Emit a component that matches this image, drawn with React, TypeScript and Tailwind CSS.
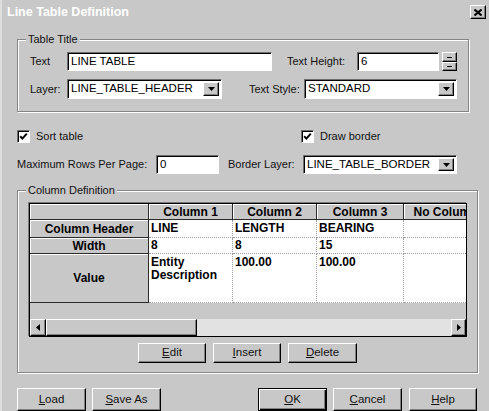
import React from "react";

const sunken =
  "border border-t-[#6e6e6e] border-l-[#6e6e6e] border-r-white border-b-white shadow-[inset_1px_1px_0_#000]";
const raised =
  "border border-t-white border-l-white border-r-black border-b-black shadow-[inset_-1px_-1px_0_#808080]";

function DownTri() {
  return (
    <svg width="7" height="4" viewBox="0 0 7 4">
      <polygon points="0,0 7,0 3.5,4" fill="#000" />
    </svg>
  );
}

function Field({ className, children }: { className: string; children?: React.ReactNode }) {
  return (
    <div className={`flex items-center bg-white pl-[3px] text-[11.5px] text-black ${sunken} ${className}`}>
      {children}
    </div>
  );
}

function Combo({ className, text }: { className: string; text: string }) {
  return (
    <div className={`flex items-center bg-white p-[2px] pl-[3px] ${sunken} ${className}`}>
      <span className="flex-1 text-[11.5px] text-black whitespace-nowrap">{text}</span>
      <div className={`h-full w-[16px] flex items-center justify-center bg-[#c8c8c8] ${raised}`}>
        <DownTri />
      </div>
    </div>
  );
}

function Btn({ className, children, def }: { className: string; children: React.ReactNode; def?: boolean }) {
  return (
    <div
      className={`flex items-center justify-center bg-[#c8c8c8] text-[11.5px] text-[#111] ${
        def
          ? "border border-black shadow-[inset_1px_1px_0_#fff,inset_-1px_-1px_0_#000,inset_-2px_-2px_0_#808080]"
          : raised
      } ${className}`}
    >
      {children}
    </div>
  );
}

function Check({ label }: { label: string }) {
  return (
    <div className="flex items-center">
      <div className={`w-[13px] h-[13px] bg-white flex items-center justify-center ${sunken}`}>
        <svg width="9" height="9" viewBox="0 0 9 9">
          <path d="M1.2 4.2 L3.4 6.6 L7.8 1.6" stroke="#000" strokeWidth="2" fill="none" />
        </svg>
      </div>
      <span className="ml-[6px] text-[11px] text-[#111]">{label}</span>
    </div>
  );
}

function Group({ className, label, children }: { className: string; label: string; children: React.ReactNode }) {
  return (
    <div
      className={`relative border border-[#858585] shadow-[inset_1px_1px_0_#fff,1px_1px_0_#fff] ${className}`}
    >
      <span className="absolute -top-[8px] left-[8px] px-[2px] bg-[#c8c8c8] text-[11px] leading-[14px] text-[#111]">
        {label}
      </span>
      {children}
    </div>
  );
}

const hdr =
  "flex-none flex items-center justify-center bg-[#c8c8c8] border-r border-b border-[#2a2a2a] shadow-[inset_1px_1px_0_#fff] text-[12px] font-bold text-black whitespace-nowrap overflow-hidden";
const cell =
  "flex-none bg-white border-r border-b border-dotted border-[#a0a0a0] pl-[2px] text-[12px] font-bold text-black leading-[13px] whitespace-nowrap";

const colW = ["w-[84px]", "w-[84px]", "w-[87px]", "w-[84px]"];

function DataRow({ h, head, vals, top }: { h: string; head: string; vals: React.ReactNode[]; top?: boolean }) {
  return (
    <div className={`flex ${h}`}>
      <div className={`${hdr} w-[119px]`}>{head}</div>
      {vals.map((v, i) => (
        <div key={i} className={`${cell} ${colW[i]} flex ${top ? "items-start pt-[2px]" : "items-center"}`}>
          {v}
        </div>
      ))}
    </div>
  );
}

export default function App() {
  return (
    <div className="w-[489px] h-[411px] overflow-hidden bg-[#c8c8c8] font-['Liberation_Sans',Arial,sans-serif] shadow-[inset_2px_0_0_#dedede]">
      {/* Title bar */}
      <div className="h-[24px] flex items-center justify-between pl-[7px] pr-[3px]">
        <span className="text-white font-bold text-[12.5px]">Line Table Definition</span>
        <div className={`w-[16px] h-[14px] flex items-center justify-center bg-[#c8c8c8] ${raised}`}>
          <svg width="8" height="7" viewBox="0 0 8 7">
            <path d="M0.5 0.5 L7.5 6.5 M7.5 0.5 L0.5 6.5" stroke="#000" strokeWidth="2" />
          </svg>
        </div>
      </div>

      <div className="pl-[17px]">
        {/* Table Title */}
        <Group className="mt-[15px] w-[452px] h-[73px]" label="Table Title">
          <div className="pl-[12px] pt-[12px]">
            <div className="flex items-center h-[19px] text-[11px] text-[#111]">
              <span className="w-[37px]">Text</span>
              <Field className="w-[205px] h-[19px]">LINE TABLE</Field>
              <span className="ml-[15px] w-[70px]">Text Height:</span>
              <Field className="w-[82px] h-[19px]">6</Field>
              <div className="ml-[3px] w-[15px] h-[19px] flex flex-col">
                <div className={`h-[10px] flex items-center justify-center bg-[#c8c8c8] ${raised}`}>
                  <div className="w-[5px] h-[1px] bg-black" />
                </div>
                <div className={`h-[9px] flex items-center justify-center bg-[#c8c8c8] ${raised}`}>
                  <div className="w-[5px] h-[1px] bg-black" />
                </div>
              </div>
            </div>
            <div className="flex items-center h-[20px] mt-[8px] text-[11px] text-[#111]">
              <span className="w-[37px]">Layer:</span>
              <Combo className="w-[155px] h-[20px]" text="LINE_TABLE_HEADER" />
              <span className="ml-[27px] w-[55px]">Text Style:</span>
              <Combo className="w-[153px] h-[20px]" text="STANDARD" />
            </div>
          </div>
        </Group>

        {/* Checkboxes */}
        <div className="flex items-center mt-[18px] h-[13px]">
          <div className="w-[284px]">
            <Check label="Sort table" />
          </div>
          <Check label="Draw border" />
        </div>

        {/* Max rows */}
        <div className="flex items-center mt-[12px] h-[19px] text-[11px] text-[#111]">
          <span className="w-[139px]">Maximum Rows Per Page:</span>
          <Field className="w-[63px] h-[19px]">0</Field>
          <span className="ml-[9px] w-[75px]">Border Layer:</span>
          <Combo className="w-[154px] h-[19px]" text="LINE_TABLE_BORDER" />
        </div>

        {/* Column Definition */}
        <Group className="mt-[16px] w-[461px] h-[183px]" label="Column Definition">
          <div className="pl-[11px] pt-[12px]">
            <div className="w-[438px] h-[134px] border border-black bg-[#c8c8c8] flex flex-col shadow-[-1px_-1px_0_#7a7a7a]">
              <div className="h-[115px] w-[436px] overflow-hidden">
                <div className="flex h-[16px]">
                  <div className={`${hdr} w-[119px]`} />
                  {["Column 1", "Column 2", "Column 3", "No Column"].map((c, i) => (
                    <div key={c} className={`${hdr} ${colW[i]}`}>
                      {c}
                    </div>
                  ))}
                </div>
                <DataRow h="h-[18px]" head="Column Header" vals={["LINE", "LENGTH", "BEARING", ""]} />
                <DataRow h="h-[16px]" head="Width" vals={["8", "8", "15", ""]} />
                <DataRow
                  h="h-[49px]"
                  head="Value"
                  top
                  vals={[
                    <span key="e">
                      Entity
                      <br />
                      Description
                    </span>,
                    "100.00",
                    "100.00",
                    "",
                  ]}
                />
              </div>
              {/* Scrollbar */}
              <div className="h-[17px] flex">
                <div className={`w-[16px] h-full flex items-center justify-center bg-[#c8c8c8] ${raised}`}>
                  <svg width="4" height="7" viewBox="0 0 4 7">
                    <polygon points="4,0 4,7 0,3.5" fill="#000" />
                  </svg>
                </div>
                <div className={`w-[151px] h-full bg-[#c8c8c8] ${raised}`} />
                <div className="flex-1 h-full bg-[#e2e2e2]" />
                <div className={`w-[15px] h-full flex items-center justify-center bg-[#c8c8c8] ${raised}`}>
                  <svg width="4" height="7" viewBox="0 0 4 7">
                    <polygon points="0,0 0,7 4,3.5" fill="#000" />
                  </svg>
                </div>
              </div>
            </div>
            <div className="flex justify-center gap-[7px] mt-[6px] pr-[11px]">
              <Btn className="w-[68px] h-[20px]">
                <span>
                  <span className="underline">E</span>dit
                </span>
              </Btn>
              <Btn className="w-[68px] h-[20px]">
                <span>
                  <span className="underline">I</span>nsert
                </span>
              </Btn>
              <Btn className="w-[69px] h-[20px]">
                <span>
                  <span className="underline">D</span>elete
                </span>
              </Btn>
            </div>
          </div>
        </Group>

        {/* Bottom buttons */}
        <div className="flex mt-[15px]">
          <Btn className="w-[69px] h-[23px]">
            <span>
              <span className="underline">L</span>oad
            </span>
          </Btn>
          <Btn className="ml-[6px] w-[69px] h-[23px]">
            <span>
              <span className="underline">S</span>ave As
            </span>
          </Btn>
          <Btn def className="ml-[97px] w-[69px] h-[23px]">
            <span>
              <span className="underline">O</span>K
            </span>
          </Btn>
          <Btn className="ml-[6px] w-[69px] h-[23px]">
            <span>
              <span className="underline">C</span>ancel
            </span>
          </Btn>
          <Btn className="ml-[7px] w-[68px] h-[23px]">
            <span>
              <span className="underline">H</span>elp
            </span>
          </Btn>
        </div>
      </div>
    </div>
  );
}
